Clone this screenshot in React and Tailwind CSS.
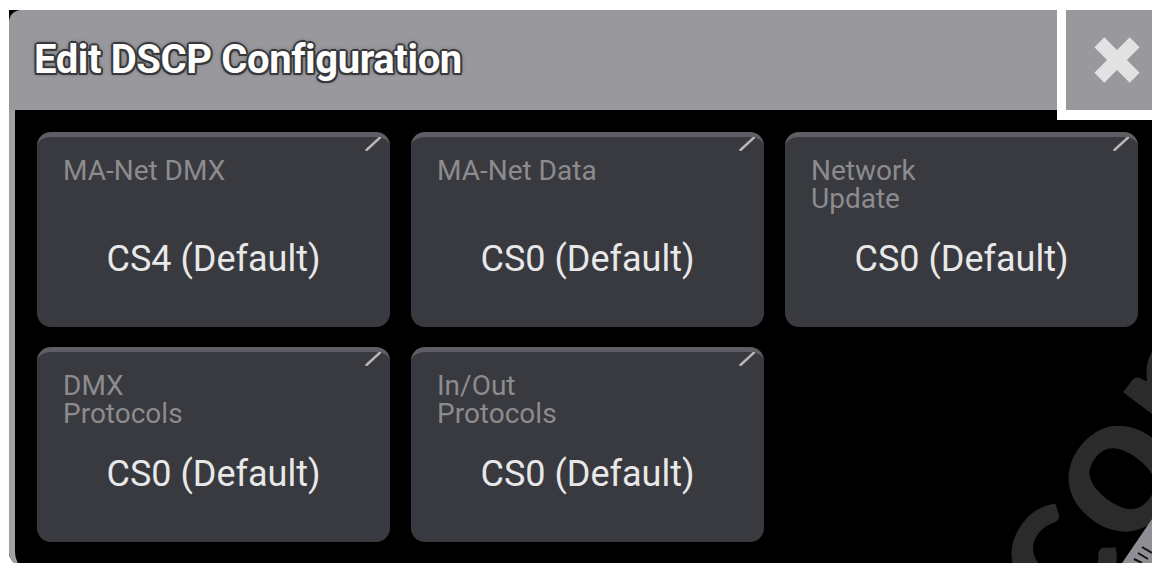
export default function App() {
  const cards = [
    { label: ["MA-Net DMX"], value: "CS4 (Default)" },
    { label: ["MA-Net Data"], value: "CS0 (Default)" },
    { label: ["Network", "Update"], value: "CS0 (Default)" },
    { label: ["DMX", "Protocols"], value: "CS0 (Default)" },
    { label: ["In/Out", "Protocols"], value: "CS0 (Default)" },
  ];
  return (
    <div className="relative w-[1152px] h-[563px] overflow-hidden bg-white pt-[10px] pl-[9px] font-['Roboto',sans-serif]">
      <div className="relative flex flex-col w-[1160px] h-[556px] bg-black rounded-bl-[14px]">
        <div className="h-[100px] shrink-0 bg-[#98989d] rounded-tl-[12px] flex items-center pl-[25px]">
          <h1 className="text-[40px] leading-none font-bold text-white tracking-[-0.4px] [text-shadow:2px_0_0_#38383a,-2px_0_0_#38383a,0_2px_0_#38383a,0_-2px_0_#38383a,1.5px_1.5px_0_#38383a,-1.5px_1.5px_0_#38383a,1.5px_-1.5px_0_#38383a,-1.5px_-1.5px_0_#38383a,0_0_4px_#222]">
            Edit DSCP Configuration
          </h1>
        </div>
        <div className="flex-1 border-l-[6px] border-[#a0a0a5] rounded-bl-[14px] pl-[22px] pt-[22px]">
          <div className="grid grid-cols-[repeat(3,353px)] auto-rows-[195px] gap-x-[21px] gap-y-[20px]">
            {cards.map((c, i) => (
              <div
                key={i}
                className="relative flex flex-col rounded-[14px] bg-[#393940] border-t-[5px] border-[#5e5e64] pt-[20px]"
              >
                <svg className="absolute top-0 right-[9px]" width="16" height="14" viewBox="0 0 16 14">
                  <line x1="15" y1="0.5" x2="1.5" y2="13" stroke="#b8b8b8" strokeWidth="2.4" strokeLinecap="round" />
                </svg>
                <div className="h-[56px] pl-[26px] text-[28px] leading-[28px] text-[#8c8c8e]">
                  {c.label.map((l, j) => (
                    <div key={j}>{l}</div>
                  ))}
                </div>
                <div className="mt-[28px] text-center text-[36px] leading-[36px] text-[#e8e8e8]">
                  {c.value}
                </div>
              </div>
            ))}
          </div>
        </div>
        <div className="absolute top-0 left-[1048px] w-[111px] h-[110px] border-l-[9px] border-b-[10px] border-white bg-[#98989d] flex items-center justify-center">
          <svg width="46" height="46" viewBox="0 0 46 46">
            <g transform="translate(23 23) rotate(45)" fill="#e2e2e2">
              <rect x="-25" y="-7" width="50" height="14" />
              <rect x="-7" y="-25" width="14" height="50" />
            </g>
          </svg>
        </div>
      </div>
      <div className="absolute left-[1090px] top-[445px] origin-bottom-left -rotate-[53deg] text-[200px] leading-none font-bold text-[#2b2b2b] font-['Lato',sans-serif] whitespace-nowrap pointer-events-none">
        con
      </div>
      <svg className="absolute right-0 bottom-0" width="30" height="44" viewBox="0 0 30 44">
        <polygon points="0,44 30,0 30,44" fill="#8e8e94" />
        <line x1="12" y1="40" x2="20" y2="44" stroke="#111" strokeWidth="2" />
        <line x1="16" y1="34" x2="26" y2="40" stroke="#111" strokeWidth="2" />
        <line x1="20" y1="28" x2="30" y2="34" stroke="#111" strokeWidth="2" />
      </svg>
    </div>
  );
}
